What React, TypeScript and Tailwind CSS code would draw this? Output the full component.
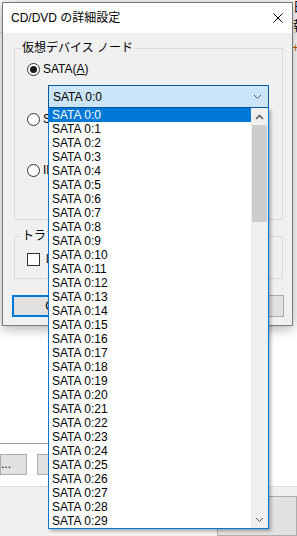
import { Fragment } from 'react';

const font = "font-['Liberation_Sans','Noto_Sans_CJK_JP',sans-serif]";
const items = Array.from({ length: 30 }, (_, i) => `SATA 0:${i}`);

function Radio({ checked, label }: { checked?: boolean; label: React.ReactNode }) {
  return (
    <div className="flex h-[13px] items-center">
      <span className="flex h-[13px] w-[13px] items-center justify-center rounded-full border border-[#333] bg-white">
        {checked && <span className="h-[7px] w-[7px] rounded-full bg-[#1a1a1a]" />}
      </span>
      <span className="ml-[3px] whitespace-nowrap text-[12px] leading-[13px] text-black">{label}</span>
    </div>
  );
}

function Chevron({ up, className }: { up?: boolean; className?: string }) {
  return (
    <svg width="9" height="6" viewBox="0 0 9 6" className={className}>
      <polyline
        points={up ? '1,5 4.5,1.5 8,5' : '1,1 4.5,4.5 8,1'}
        fill="none"
        stroke="currentColor"
        strokeWidth={up ? 1.6 : 1}
      />
    </svg>
  );
}

function Group({ label, className, children }: { label: string; className: string; children: React.ReactNode }) {
  return (
    <div className={`relative border border-[#dcdcdc] ${className}`}>
      <span className="absolute left-[6px] top-[-9px] whitespace-nowrap bg-[#f0f0f0] px-[1px] text-[12px] leading-[16px] text-black">
        {label}
      </span>
      {children}
    </div>
  );
}

export default function App() {
  return (
    <div className={`relative flex h-[536px] w-[297px] flex-col overflow-hidden bg-white ${font}`}>
      {/* background window */}
      <div className="flex h-[453px] flex-col">
        <div className="flex h-[33px] items-center border-b border-[#dcdcdc] pl-[293px] text-[13px] text-black">日報</div>
        <div className="pl-[292px] pt-[6px] text-[12px] text-[#b06000]">+</div>
      </div>
      <div className="w-[250px] border-t border-[#a0a0a0]" />
      <div className="flex h-[43px] items-start gap-[10px] pt-[10px]">
        <button className="h-[21px] w-[27px] border border-[#adadad] bg-[#e1e1e1] text-left text-[12px] leading-[16px]">...</button>
        <button className="h-[21px] w-[80px] border border-[#adadad] bg-[#e1e1e1]" />
      </div>
      <div className="flex flex-1 flex-col border-t border-[#dcdcdc] bg-[#f0f0f0] pt-[9px]">
        <div className="ml-auto h-[40px] w-[80px] border border-[#adadad] bg-[#e1e1e1]" />
      </div>

      {/* dialog */}
      <div className="absolute left-[2px] top-[2px] flex h-[324px] w-[291px] flex-col border border-[#7a7a7a] bg-[#f0f0f0] shadow-[0_2px_12px_rgba(0,0,0,0.35)]">
        <div className="flex h-[30px] items-center justify-between bg-white pl-[8px] pr-[9px]">
          <span className="text-[12px] text-black">CD/DVD の詳細設定</span>
          <svg width="10" height="10" viewBox="0 0 10 10">
            <path d="M0.5 0.5L9.5 9.5M9.5 0.5L0.5 9.5" stroke="#000" strokeWidth="1" />
          </svg>
        </div>
        <div className="flex flex-1 flex-col px-[11px] pt-[15px]">
          <Group label="仮想デバイス ノード" className="h-[172px] w-[269px]">
            <div className="flex flex-col pl-[12px] pt-[14px]">
              <Radio
                checked
                label={
                  <Fragment>
                    SATA(<span className="underline">A</span>)
                  </Fragment>
                }
              />
              <div className="ml-[21px] mt-[9px] flex h-[23px] w-[221px] items-center justify-between border border-[#005a9e] bg-[#cce4f7] pl-[4px] pr-[6px] text-[12px] text-black">
                <span>SATA 0:0</span>
                <Chevron className="text-[#606060]" />
              </div>
              <div className="mt-[5px]">
                <Radio label="SCSI(S)" />
              </div>
              <div className="mt-[38px]">
                <Radio label="IDE(I)" />
              </div>
            </div>
          </Group>
          <Group label="トラブルシューティング" className="mt-[16px] h-[43px] w-[269px]">
            <div className="flex items-center pl-[12px] pt-[16px]">
              <span className="h-[13px] w-[13px] border border-[#333] bg-white" />
              <span className="ml-[4px] whitespace-nowrap text-[12px] leading-[13px]">レガシー エミュレーション(L)</span>
            </div>
          </Group>
          <div className="-ml-[2px] mt-[16px] flex h-[22px] w-[272px] justify-between">
            <button className="h-[22px] w-[84px] border-2 border-[#0078d7] bg-[#e1e1e1] text-[12px]">OK</button>
            <button className="h-[22px] w-[84px] border border-[#adadad] bg-[#e1e1e1] text-[12px]">キャンセル</button>
            <button className="h-[22px] w-[84px] border border-[#adadad] bg-[#e1e1e1] text-[12px]">ヘルプ</button>
          </div>
        </div>
      </div>

      {/* dropdown list */}
      <div className="absolute left-[48px] top-[108px] flex h-[421px] w-[221px] border-x border-b border-[#0078d7] bg-white shadow-[2px_2px_3px_rgba(0,0,0,0.3)]">
        <div className="flex flex-1 flex-col overflow-hidden">
          {items.map((it, i) => (
            <div
              key={it}
              className={`h-[14px] shrink-0 pl-[3px] text-[12px] leading-[14px] ${
                i === 0 ? 'bg-[#0078d7] text-white' : 'text-black'
              }`}
            >
              {it}
            </div>
          ))}
        </div>
        <div className="flex w-[17px] flex-col bg-[#f0f0f0]">
          <div className="flex h-[17px] items-center justify-center text-[#606060]">
            <Chevron up />
          </div>
          <div className="mx-[1px] h-[97px] bg-[#cdcdcd]" />
          <div className="flex-1" />
          <div className="flex h-[17px] items-center justify-center text-[#606060]">
            <Chevron />
          </div>
        </div>
      </div>
    </div>
  );
}
